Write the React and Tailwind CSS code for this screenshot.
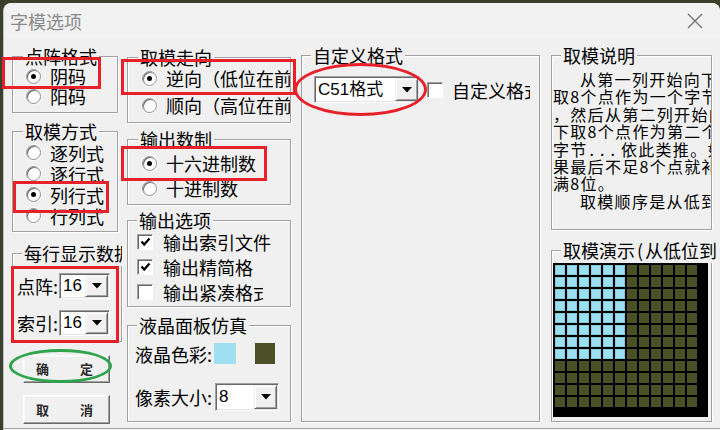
import React from "react";

function Radio({ checked }) {
  return (
    <span className="flex h-[15px] w-[15px] shrink-0 items-center justify-center rounded-full border border-[#8f8f8f] bg-white shadow-[inset_1px_1px_0_#6a6a6a,0_0_0_1px_#f8f8f8]">
      {checked && <span className="h-[5px] w-[5px] rounded-full bg-black" />}
    </span>
  );
}

function Check({ checked }) {
  return (
    <span className="flex h-[16px] w-[16px] shrink-0 items-center justify-center border border-t-[#a0a0a0] border-l-[#a0a0a0] border-b-[#ffffff] border-r-[#ffffff] bg-white shadow-[inset_1px_1px_0_#696969]">
      {checked && (
        <svg width="11" height="10" viewBox="0 0 11 10">
          <path d="M1.5 4.5 L4.2 7.5 L9.5 1.5" fill="none" stroke="#000" strokeWidth="2.2" />
        </svg>
      )}
    </span>
  );
}

function Combo({ value, className }) {
  return (
    <div className={`flex shrink-0 border border-t-[#a0a0a0] border-l-[#a0a0a0] border-b-[#ffffff] border-r-[#ffffff] bg-white p-[1px] shadow-[inset_1px_1px_0_#696969,inset_-1px_-1px_0_#e3e3e3] ${className}`}>
      <div className="flex flex-1 items-center whitespace-nowrap pl-[2px] font-['Liberation_Sans','Noto_Sans_CJK_SC',sans-serif] text-[17px] leading-[20px]">
        {value}
      </div>
      <div className="flex w-[23px] shrink-0 items-center justify-center border border-t-[#f0f0f0] border-l-[#f0f0f0] border-b-[#696969] border-r-[#696969] bg-[#f0f0f0] shadow-[inset_1px_1px_0_#ffffff,inset_-1px_-1px_0_#a0a0a0]">
        <svg width="10" height="6" viewBox="0 0 10 6">
          <polygon points="0,0 10,0 5,5.5" fill="#000" />
        </svg>
      </div>
    </div>
  );
}

function Group({ title, className = "", labelClass = "", children }) {
  return (
    <div className={`relative shrink-0 border border-[#a0a0a0] shadow-[inset_1px_1px_0_#ffffff,1px_1px_0_#ffffff] ${className}`}>
      <div className={`absolute left-[9px] top-[-14px] whitespace-nowrap bg-[#f0f0f0] px-[2px] text-[18px] leading-[26px] ${labelClass}`}>
        {title}
      </div>
      {children}
    </div>
  );
}

function RadioRow({ checked, label, className = "" }) {
  return (
    <div className={`flex h-[20px] items-center whitespace-nowrap ${className}`}>
      <Radio checked={checked} />
      <span className="ml-[9px]">{label}</span>
    </div>
  );
}

function CheckRow({ checked, label, className = "" }) {
  return (
    <div className={`flex h-[20px] items-center whitespace-nowrap ${className}`}>
      <Check checked={checked} />
      <span className="ml-[10px]">{label}</span>
    </div>
  );
}

function Btn({ a, b, className }) {
  return (
    <div className={`flex items-center justify-between border border-t-[#ffffff] border-l-[#ffffff] border-b-[#696969] border-r-[#696969] bg-[#f0f0f0] pl-[12px] pr-[16px] text-[13px] font-semibold text-[#2a2a2a] shadow-[inset_-1px_-1px_0_#a0a0a0,inset_1px_1px_0_#f8f8f8] ${className}`}>
      <span>{a}</span>
      <span>{b}</span>
    </div>
  );
}

const lines = [
  { t: "从第一列开始向下", indent: true },
  { t: "取8个点作为一个字节" },
  { t: "，然后从第二列开始向" },
  { t: "下取8个点作为第二个" },
  { t: "dots" },
  { t: "果最后不足8个点就补" },
  { t: "满8位。" },
  { t: "取模顺序是从低到高", indent: true },
];

export default function App() {
  const cells = [];
  for (let r = 0; r < 12; r++) {
    for (let c = 0; c < 12; c++) {
      const lit = r < 8 && c < 6;
      cells.push(
        <div key={r * 12 + c} className={lit ? "h-[10px] w-[10px] bg-[#9be0f1] shadow-[inset_0_0_0_1px_#86c8d8]" : "h-[10px] w-[10px] bg-[#4b5127]"} />
      );
    }
  }

  return (
    <div className="relative h-[430px] w-[720px] overflow-hidden bg-[#3b402d] pl-[3px] pt-[3px] font-['Noto_Sans_CJK_SC',sans-serif] text-[18px] leading-[20px] text-black">
      <div className="flex h-[427px] w-[717px] flex-col rounded-tl-[8px] rounded-tr-[8px] border-l border-[#b9c2c4] bg-[#f0f0f0]">
        {/* title bar */}
        <div className="flex h-[35px] items-center justify-between rounded-tl-[8px] rounded-tr-[8px] bg-[#f2f2f2] pl-[6px] pr-[17px]">
          <span className="text-[18px] text-[#8a8a8a]">字模选项</span>
          <svg width="16" height="16" viewBox="0 0 16 16">
            <path d="M1 1 L15 15 M15 1 L1 15" stroke="#707070" strokeWidth="1.3" fill="none" />
          </svg>
        </div>

        {/* body */}
        <div className="flex items-start border-b border-[#a8a8a8] pb-[4px] pl-[8px]">
          {/* left column */}
          <div className="flex w-[110px] shrink-0 flex-col items-start">
            <Group title="点阵格式" className="mt-[18px] h-[57px] w-[106px] pl-[13px] pt-[9px]" labelClass="left-[10px]">
              <RadioRow checked label="阴码" />
              <RadioRow label="阳码" />
            </Group>
            <Group title="取模方式" className="mt-[18px] h-[101px] w-[106px] pl-[13px] pt-[10px]" labelClass="left-[10px]">
              <RadioRow label="逐列式" className="h-[21px]" />
              <RadioRow label="逐行式" className="h-[21px]" />
              <RadioRow checked label="列行式" className="h-[21px]" />
              <RadioRow label="行列式" className="h-[21px]" />
            </Group>
            <Group title="每行显示数据" className="mt-[21px] h-[89px] w-[110px] pl-[4px] pt-[19px]" labelClass="max-w-[100px] overflow-hidden">
              <div className="flex items-center">
                <span className="w-[42px] whitespace-nowrap">点阵:</span>
                <Combo value="16" className="h-[26px] w-[51px]" />
              </div>
              <div className="mt-[11px] flex items-center">
                <span className="w-[42px] whitespace-nowrap">索引:</span>
                <Combo value="16" className="h-[26px] w-[51px]" />
              </div>
            </Group>
            <Btn a="确" b="定" className="ml-[11px] mt-[13px] h-[28px] w-[87px]" />
            <Btn a="取" b="消" className="ml-[11px] mt-[12px] h-[29px] w-[87px]" />
          </div>

          {/* middle column */}
          <div className="ml-[5px] flex w-[164px] shrink-0 flex-col">
            <Group title="取模走向" className="mt-[19px] h-[66px] w-[164px] pt-[10px]" labelClass="left-[10px]">
              <div className="overflow-hidden pl-[14px]">
                <RadioRow checked label="逆向（低位在前）" />
                <RadioRow label="顺向（高位在前）" className="mt-[7px]" />
              </div>
            </Group>
            <Group title="输出数制" className="mt-[16px] h-[66px] w-[164px] pl-[14px] pt-[13px]" labelClass="left-[10px]">
              <RadioRow checked label="十六进制数" />
              <RadioRow label="十进制数" className="mt-[5px]" />
            </Group>
            <Group title="输出选项" className="mt-[15px] h-[87px] w-[164px] pl-[9px] pt-[11px]">
              <CheckRow checked label="输出索引文件" />
              <CheckRow checked label="输出精简格" className="mt-[5px]" />
              <div className="mt-[5px] w-[126px] overflow-hidden">
                <CheckRow label="输出紧凑格式" />
              </div>
            </Group>
            <Group title="液晶面板仿真" className="mt-[18px] h-[97px] w-[164px] pl-[7px] pt-[17px]">
              <div className="flex items-center">
                <span className="w-[79px] whitespace-nowrap">液晶色彩:</span>
                <div className="h-[21px] w-[22px] bg-[#9ee0f1]" />
                <div className="ml-[19px] h-[21px] w-[20px] bg-[#4b5026]" />
              </div>
              <div className="mt-[19px] flex items-center">
                <span className="w-[80px] whitespace-nowrap">像素大小:</span>
                <Combo value="8" className="h-[28px] w-[64px]" />
              </div>
            </Group>
          </div>

          {/* custom format column */}
          <div className="ml-[10px] flex w-[239px] shrink-0 flex-col">
            <Group title="自定义格式" className="mt-[17px] h-[367px] w-[239px] pl-[12px] pt-[20px]">
              <div className="flex w-[216px] items-center overflow-hidden whitespace-nowrap">
                <Combo value="C51格式" className="h-[27px] w-[106px]" />
                <span className="ml-[7px]">
                  <Check />
                </span>
                <span className="ml-[9px]">自定义格式</span>
              </div>
            </Group>
          </div>

          {/* right column */}
          <div className="ml-[11px] flex w-[161px] shrink-0 flex-col">
            <Group title="取模说明" className="mt-[17px] h-[175px] w-[161px] pl-[1px] pt-[15px]">
              <div className="overflow-hidden text-[16px] leading-[17.4px] tracking-[1.3px]">
                {lines.map((l, i) => (
                  <div key={i} className={`whitespace-nowrap ${l.indent ? "pl-[27px]" : ""}`}>
                    {l.t === "dots" ? (
                      <>
                        字节<span className="pl-[2px] tracking-[6px]">...</span>依此类推。如果
                      </>
                    ) : (
                      l.t
                    )}
                  </div>
                ))}
              </div>
            </Group>
            <Group
              title={
                <>
                  取模演示<span className="px-[2px]">(</span>从低位到高位)
                </>
              }
              className="mt-[20px] h-[172px] w-[161px] pl-[1px] pt-[12px]"
              labelClass="max-w-[156px] overflow-hidden"
            >
              <div className="h-[154px] w-[155px] bg-black p-[2px]">
                <div className="grid grid-cols-[repeat(12,10px)] gap-[2px]">{cells}</div>
              </div>
            </Group>
          </div>
        </div>
      </div>

      {/* annotations */}
      <div className="absolute left-[2px] top-[57px] h-[32px] w-[99px] border-[3px] border-[#e8202a]" />
      <div className="absolute left-[13px] top-[181px] h-[32px] w-[96px] border-[3px] border-[#e8202a]" />
      <div className="absolute left-[11px] top-[266px] h-[77px] w-[108px] border-[3px] border-[#e8202a]" />
      <div className="absolute left-[121px] top-[59px] h-[36px] w-[175px] border-[3px] border-[#e8202a]" />
      <div className="absolute left-[121px] top-[146px] h-[35px] w-[146px] border-[3px] border-[#e8202a]" />
      <div className="absolute left-[294px] top-[63px] h-[53px] w-[133px] rounded-[50%] border-[3px] border-[#e8202a]" />
      <div className="absolute left-[9px] top-[349px] h-[34px] w-[103px] rounded-[50%] border-[3px] border-[#2ea44c]" />
    </div>
  );
}
